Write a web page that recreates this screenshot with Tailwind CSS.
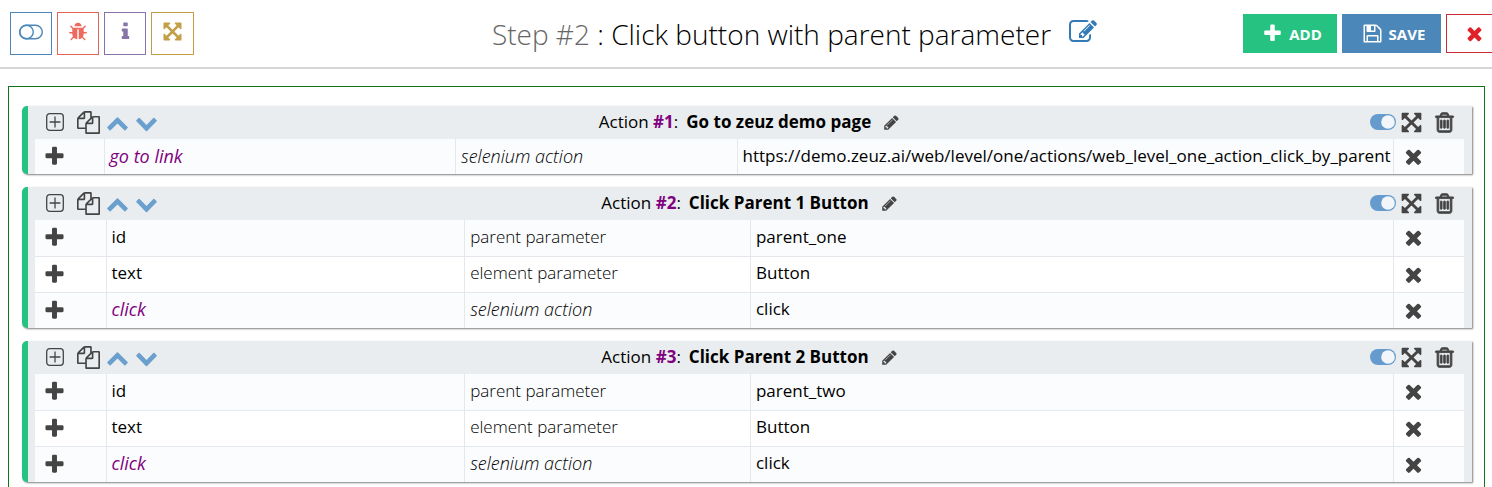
<!DOCTYPE html>
<html lang="en">
<head>
<meta charset="utf-8">
<meta name="viewport" content="width=device-width, initial-scale=1">
<title>Step #2 : Click button with parent parameter</title>
<script src="https://cdn.jsdelivr.net/npm/@tailwindcss/browser@4"></script>
</head>
<body class="bg-white font-['Open_Sans',sans-serif] text-[17px] leading-6 text-black overflow-x-hidden">
<svg class="hidden" aria-hidden="true">
  <symbol id="plus" viewBox="0 0 1792 1792"><path d="M1600 736v192q0 40-28 68t-68 28h-416v416q0 40-28 68t-68 28h-192q-40 0-68-28t-28-68v-416h-416q-40 0-68-28t-28-68v-192q0-40 28-68t68-28h416v-416q0-40 28-68t68-28h192q40 0 68 28t28 68v416h416q40 0 68 28t28 68z"/></symbol>
  <symbol id="times" viewBox="0 0 1792 1792"><path d="M1490 1322q0 40-28 68l-136 136q-28 28-68 28t-68-28l-294-294-294 294q-28 28-68 28t-68-28l-136-136q-28-28-28-68t28-68l294-294-294-294q-28-28-28-68t28-68l136-136q28-28 68-28t68 28l294 294 294-294q28-28 68-28t68 28l136 136q28 28 28 68t-28 68l-294 294 294 294q28 28 28 68z"/></symbol>
  <symbol id="arrows" viewBox="0 0 1792 1792"><path d="M1411 541l-355 355 355 355 144-144q29-31 70-14 39 17 39 59v448q0 26-19 45t-45 19h-448q-42 0-59-40-17-39 14-69l144-144-355-355-355 355 144 144q31 30 14 69-17 40-59 40h-448q-26 0-45-19t-19-45v-448q0-42 40-59 39-17 69 14l144 144 355-355-355-355-144 144q-19 19-45 19-12 0-24-5-40-17-40-59v-448q0-26 19-45t45-19h448q42 0 59 40 17 39-14 69l-144 144 355 355 355-355-144-144q-31-30-14-69 17-40 59-40h448q26 0 45 19t19 45v448q0 42-39 59-13 5-25 5-26 0-45-19z"/></symbol>
  <symbol id="bug" viewBox="0 0 1792 1792"><path d="M1696 960q0 26-19 45t-45 19h-224q0 171-67 290l208 209q19 19 19 45t-19 45q-18 19-45 19t-45-19l-198-197q-5 5-15 13t-42 28.5-65 36.5-82 29-97 13v-896h-128v896q-51 0-101.5-13.5t-87-33-66-39-43.5-32.5l-15-14-183 207q-20 21-48 21-24 0-43-16-19-18-20.5-44.5t15.5-46.5l202-227q-58-114-58-274h-224q-26 0-45-19t-19-45 19-45 45-19h224v-294l-173-173q-19-19-19-45t19-45 45-19 45 19l173 173h844l173-173q19-19 45-19t45 19 19 45-19 45l-173 173v294h224q26 0 45 19t19 45zm-480-576h-640q0-133 93.5-226.5t226.5-93.5 226.5 93.5 93.5 226.5z"/></symbol>
  <symbol id="info" viewBox="0 0 1792 1792"><path d="M1216 1344v128q0 26-19 45t-45 19h-512q-26 0-45-19t-19-45v-128q0-26 19-45t45-19h64v-384h-64q-26 0-45-19t-19-45v-128q0-26 19-45t45-19h384q26 0 45 19t19 45v576h64q26 0 45 19t19 45zm-128-1152v192q0 26-19 45t-45 19h-256q-26 0-45-19t-19-45v-192q0-26 19-45t45-19h256q26 0 45 19t19 45z"/></symbol>
  <symbol id="pencil" viewBox="0 0 1792 1792"><path d="M491 1536l91-91-235-235-91 91v107h128v128h107zm523-928q0-22-22-22-10 0-17 7l-542 542q-7 7-7 17 0 22 22 22 10 0 17-7l542-542q7-7 7-17zm-54-192l416 416-832 832h-416v-416zm683 96q0 53-37 90l-166 166-416-416 166-165q36-38 90-38 53 0 91 38l235 234q37 39 37 91z"/></symbol>
  <symbol id="edit" viewBox="0 0 1792 1792"><path d="M888 1184l116-116-152-152-116 116v56h96v96h56zm440-720q-16-16-33 1l-350 350q-17 17-1 33t33-1l350-350q17-17 1-33zm80 594v190q0 119-84.500 203.500t-203.500 84.500h-832q-119 0-203.500-84.500t-84.500-203.500v-832q0-119 84.500-203.500t203.500-84.500h832q63 0 117 25 15 7 18 23 3 17-9 29l-49 49q-14 14-32 8-23-6-45-6h-832q-66 0-113 47t-47 113v832q0 66 47 113t113 47h832q66 0 113-47t47-113v-126q0-13 9-22l64-64q15-15 35-7t20 29zm-96-738l288 288-672 672h-288v-288zm444 132l-92 92-288-288 92-92q28-28 68-28t68 28l152 152q28 28 28 68t-28 68z"/></symbol>
  <symbol id="floppy" viewBox="0 0 1792 1792"><path d="M512 1536h768v-384h-768v384zm896 0h128v-896q0-14-10-38.500t-20-34.500l-281-281q-10-10-34-20t-39-10v416q0 40-28 68t-68 28h-576q-40 0-68-28t-28-68v-416h-128v1280h128v-416q0-40 28-68t68-28h832q40 0 68 28t28 68v416zm-384-928v-320q0-13-9.500-22.500t-22.500-9.500h-192q-13 0-22.500 9.500t-9.500 22.500v320q0 13 9.500 22.500t22.500 9.500h192q13 0 22.500-9.500t9.500-22.500zm640 32v928q0 40-28 68t-68 28h-1344q-40 0-68-28t-28-68v-1344q0-40 28-68t68-28h928q40 0 88 20t76 48l280 280q28 28 48 76t20 88z"/></symbol>
  <symbol id="files" viewBox="0 0 1792 1792"><path d="M1696 384q40 0 68 28t28 68v1216q0 40-28 68t-68 28h-960q-40 0-68-28t-28-68v-288h-544q-40 0-68-28t-28-68v-672q0-40 20-88t48-76l408-408q28-28 76-48t88-20h416q40 0 68 28t28 68v328q68-40 128-40h416zm-544 213l-299 299h299v-299zm-640-384l-299 299h299v-299zm196 647l316-316v-416h-384v416q0 40-28 68t-68 28h-416v640h512v-256q0-40 20-88t48-76zm956 804v-1152h-384v416q0 40-28 68t-68 28h-416v640h896z"/></symbol>
  <symbol id="up" viewBox="0 0 1792 1792"><path d="M1683 1331l-166 165q-19 19-45 19t-45-19l-531-531-531 531q-19 19-45 19t-45-19l-166-165q-19-19-19-45.500t19-45.500l742-741q19-19 45-19t45 19l742 741q19 19 19 45.500t-19 45.500z"/></symbol>
  <symbol id="down" viewBox="0 0 1792 1792"><path d="M1683 808l-742 741q-19 19-45 19t-45-19l-742-741q-19-19-19-45.500t19-45.500l166-165q19-19 45-19t45 19l531 531 531-531q19-19 45-19t45 19l166 165q19 19 19 45.500t-19 45.500z"/></symbol>
  <symbol id="trash" viewBox="0 0 1792 1792"><path stroke="currentColor" stroke-width="70" d="M704 736v576q0 14-9 23t-23 9h-64q-14 0-23-9t-9-23v-576q0-14 9-23t23-9h64q14 0 23 9t9 23zm256 0v576q0 14-9 23t-23 9h-64q-14 0-23-9t-9-23v-576q0-14 9-23t23-9h64q14 0 23 9t9 23zm256 0v576q0 14-9 23t-23 9h-64q-14 0-23-9t-9-23v-576q0-14 9-23t23-9h64q14 0 23 9t9 23zm128 724v-948h-896v948q0 22 7 40.500t14.500 27 10.500 8.500h832q3 0 10.500-8.500t14.500-27 7-40.500zm-672-1076h448l-48-117q-7-9-17-11h-317q-10 2-17 11zm928 32v64q0 14-9 23t-23 9h-96v948q0 83-47 143.500t-113 60.500h-832q-66 0-113-58.500t-47-141.500v-952h-96q-14 0-23-9t-9-23v-64q0-14 9-23t23-9h309l70-167q15-37 54-63t79-26h320q40 0 79 26t54 63l70 167h309q14 0 23 9t9 23z"/></symbol>
  <symbol id="plusbox" viewBox="0 0 18 18"><g fill="none" stroke="currentColor" stroke-width="1.300"><rect x="0.700" y="0.700" width="16.600" height="16.600" rx="3"/><path d="M9 3.600v10.800M3.600 9h10.800"/></g></symbol>
  <symbol id="toggle" viewBox="0 0 26 16"><rect width="26" height="16" rx="8"/><circle cx="18" cy="8" r="6.800" fill="#f2f6fa"/></symbol>
  <symbol id="toggleline" viewBox="0 0 24 16"><g fill="none" stroke="currentColor" stroke-width="1.400"><rect x="0.700" y="1.200" width="22.600" height="13.600" rx="6.800"/><circle cx="7.500" cy="8" r="6.800"/></g></symbol>
</svg>

<header class="flex h-[69px] items-start border-b-2 border-[#d6d6d6] pl-[10px]">
  <nav class="mt-3 flex gap-[5px]" aria-label="Step tools">
    <button aria-label="Toggle" class="grid h-[43px] w-[42px] place-items-center border border-[#4c87b9] text-[#4c87b9]"><svg class="mb-[3px] h-4 w-6 fill-current"><use href="#toggleline"/></svg></button>
    <button aria-label="Debug" class="grid h-[43px] w-[42px] place-items-center border border-[#e7645a] text-[#ee6a5f]"><svg class="mb-1 size-[20px] fill-current"><use href="#bug"/></svg></button>
    <button aria-label="Info" class="grid h-[43px] w-[42px] place-items-center border border-[#8572a8] text-[#8775a7]"><svg class="mb-1 size-[21px] fill-current"><use href="#info"/></svg></button>
    <button aria-label="Expand" class="grid h-[43px] w-[43px] place-items-center border border-[#c29d43] text-[#c49f47]"><svg class="mb-1 size-[21px] fill-current"><use href="#arrows"/></svg></button>
  </nav>
  <div class="flex h-[67px] flex-1 items-center justify-center gap-[18px] pl-[152px] text-[28px] font-light">
    <h1 class="whitespace-nowrap"><span class="text-[#666]">Step #2</span> : Click button with parent parameter</h1>
    <button aria-label="Rename step" class="text-[#337ab7]"><svg class="mb-1 size-7 fill-current"><use href="#edit"/></svg></button>
  </div>
  <div class="mt-[14px] -mr-[10px] flex gap-[5px] text-[15px] font-bold text-white">
    <button class="flex h-[39px] w-[94px] items-center justify-center gap-[6px] bg-[#26c281] pl-1"><svg class="size-[21px] fill-current"><use href="#plus"/></svg>ADD</button>
    <button class="flex h-[39px] w-[99px] items-center justify-center gap-[6px] bg-[#4c87b9] pl-1"><svg class="size-[21px] fill-current"><use href="#floppy"/></svg>SAVE</button>
    <button aria-label="Close" class="flex h-[39px] w-14 items-center justify-center border border-[#cb2b36] text-[#e02228]"><svg class="size-[21px] fill-current"><use href="#times"/></svg></button>
  </div>
</header>

<main class="mt-[17px] mr-[7px] ml-2 flex flex-col gap-[13px] border border-[#12761a] py-[19px] pr-3 pl-[13px]">

  <section class="rounded-l-[5px] border-l-6 border-[#26c281] bg-[#e9edef] pr-2 pl-[7px] shadow-[1px_1px_2px_rgba(0,0,0,0.5)]">
    <div class="grid h-[33px] grid-cols-[1fr_auto_1fr] items-center pb-px text-[#444]">
      <div class="flex items-center pl-[11px]">
        <button aria-label="Add row" class="mr-[13px]"><svg class="size-[18px] fill-current"><use href="#plusbox"/></svg></button>
        <button aria-label="Duplicate" class="mr-[6px]"><svg class="size-[23px] fill-current"><use href="#files"/></svg></button>
        <button aria-label="Move up" class="mr-[6px] text-[#6a9fce]"><svg class="size-[23px] fill-current"><use href="#up"/></svg></button>
        <button aria-label="Move down" class="text-[#6a9fce]"><svg class="size-[23px] fill-current"><use href="#down"/></svg></button>
      </div>
      <h2 class="flex items-center gap-2 text-black"><span>Action <b class="text-[#800080]">#1</b>:</span><b>Go to zeuz demo page</b><button aria-label="Rename action" class="ml-1 text-[#444]"><svg class="size-[17px] fill-current"><use href="#pencil"/></svg></button></h2>
      <div class="flex items-center justify-end pr-2">
        <button aria-label="Enabled" class="mr-1 text-[#659bcd]"><svg class="h-4 w-[26px] fill-current"><use href="#toggle"/></svg></button>
        <button aria-label="Expand" class="mr-[10px]"><svg class="size-[23px] fill-current"><use href="#arrows"/></svg></button>
        <button aria-label="Delete"><svg class="size-[23px] fill-current"><use href="#trash"/></svg></button>
      </div>
    </div>
    <table class="w-full table-fixed bg-[#fbfcfd]">
      <colgroup><col class="w-[69px]"><col class="w-[24.6%]"><col class="w-[19.7%]"><col><col class="w-[71px]"></colgroup>
      <tbody class="[&_td]:border-l [&_td]:border-[#e4e8ec] [&_td]:px-[5px] [&_td]:pt-0 [&_td]:pb-[2px] [&_td]:whitespace-nowrap [&_td:first-child]:border-l-0 [&_td:first-child]:pb-0 [&_td:first-child]:pl-2 [&_td:last-child]:pb-0 [&_td:last-child]:pl-2">
        <tr class="h-[35px]"><td><button aria-label="Add" class="block text-[#444]"><svg class="size-[23px] fill-current"><use href="#plus"/></svg></button></td><td class="text-lg/6 text-[#800080] italic">go to link</td><td class="text-lg/6 font-light italic">selenium action</td><td>https://demo.zeuz.ai/web/level/one/actions/web_level_one_action_click_by_parent</td><td><button aria-label="Remove" class="block text-[#444]"><svg class="size-[23px] fill-current"><use href="#times"/></svg></button></td></tr>
      </tbody>
    </table>
  </section>

  <section class="rounded-l-[5px] border-l-6 border-[#26c281] bg-[#e9edef] pr-2 pl-[7px] shadow-[1px_1px_2px_rgba(0,0,0,0.5)]">
    <div class="grid h-[33px] grid-cols-[1fr_auto_1fr] items-center pb-px text-[#444]">
      <div class="flex items-center pl-[11px]">
        <button aria-label="Add row" class="mr-[13px]"><svg class="size-[18px] fill-current"><use href="#plusbox"/></svg></button>
        <button aria-label="Duplicate" class="mr-[6px]"><svg class="size-[23px] fill-current"><use href="#files"/></svg></button>
        <button aria-label="Move up" class="mr-[6px] text-[#6a9fce]"><svg class="size-[23px] fill-current"><use href="#up"/></svg></button>
        <button aria-label="Move down" class="text-[#6a9fce]"><svg class="size-[23px] fill-current"><use href="#down"/></svg></button>
      </div>
      <h2 class="flex items-center gap-2 text-black"><span>Action <b class="text-[#800080]">#2</b>:</span><b>Click Parent 1 Button</b><button aria-label="Rename action" class="ml-1 text-[#444]"><svg class="size-[17px] fill-current"><use href="#pencil"/></svg></button></h2>
      <div class="flex items-center justify-end pr-2">
        <button aria-label="Enabled" class="mr-1 text-[#659bcd]"><svg class="h-4 w-[26px] fill-current"><use href="#toggle"/></svg></button>
        <button aria-label="Expand" class="mr-[10px]"><svg class="size-[23px] fill-current"><use href="#arrows"/></svg></button>
        <button aria-label="Delete"><svg class="size-[23px] fill-current"><use href="#trash"/></svg></button>
      </div>
    </div>
    <table class="w-full table-fixed bg-white">
      <colgroup><col class="w-[71px]"><col class="w-[25.1%]"><col class="w-[20%]"><col><col class="w-[71px]"></colgroup>
      <tbody class="[&_tr]:h-9 [&_tr]:border-b [&_tr]:border-[#e4e8ec] [&_tr:last-child]:border-b-0 [&_tr:nth-child(odd)]:bg-[#fbfcfd] [&_td]:border-l [&_td]:border-[#e4e8ec] [&_td]:px-[5px] [&_td]:pt-0 [&_td]:pb-[2px] [&_td]:whitespace-nowrap [&_td:first-child]:border-l-0 [&_td:first-child]:pb-0 [&_td:first-child]:pl-2 [&_td:last-child]:pb-0 [&_td:last-child]:pl-2">
        <tr><td><button aria-label="Add" class="block text-[#444]"><svg class="size-[23px] fill-current"><use href="#plus"/></svg></button></td><td>id</td><td class="font-light">parent parameter</td><td>parent_one</td><td><button aria-label="Remove" class="block text-[#444]"><svg class="size-[23px] fill-current"><use href="#times"/></svg></button></td></tr>
        <tr><td><button aria-label="Add" class="block text-[#444]"><svg class="size-[23px] fill-current"><use href="#plus"/></svg></button></td><td>text</td><td class="font-light">element parameter</td><td>Button</td><td><button aria-label="Remove" class="block text-[#444]"><svg class="size-[23px] fill-current"><use href="#times"/></svg></button></td></tr>
        <tr><td><button aria-label="Add" class="block text-[#444]"><svg class="size-[23px] fill-current"><use href="#plus"/></svg></button></td><td class="text-lg/6 text-[#800080] italic">click</td><td class="text-lg/6 font-light italic">selenium action</td><td>click</td><td><button aria-label="Remove" class="block text-[#444]"><svg class="size-[23px] fill-current"><use href="#times"/></svg></button></td></tr>
      </tbody>
    </table>
  </section>

  <section class="rounded-l-[5px] border-l-6 border-[#26c281] bg-[#e9edef] pr-2 pl-[7px] shadow-[1px_1px_2px_rgba(0,0,0,0.5)]">
    <div class="grid h-[33px] grid-cols-[1fr_auto_1fr] items-center pb-px text-[#444]">
      <div class="flex items-center pl-[11px]">
        <button aria-label="Add row" class="mr-[13px]"><svg class="size-[18px] fill-current"><use href="#plusbox"/></svg></button>
        <button aria-label="Duplicate" class="mr-[6px]"><svg class="size-[23px] fill-current"><use href="#files"/></svg></button>
        <button aria-label="Move up" class="mr-[6px] text-[#6a9fce]"><svg class="size-[23px] fill-current"><use href="#up"/></svg></button>
        <button aria-label="Move down" class="text-[#6a9fce]"><svg class="size-[23px] fill-current"><use href="#down"/></svg></button>
      </div>
      <h2 class="flex items-center gap-2 text-black"><span>Action <b class="text-[#800080]">#3</b>:</span><b>Click Parent 2 Button</b><button aria-label="Rename action" class="ml-1 text-[#444]"><svg class="size-[17px] fill-current"><use href="#pencil"/></svg></button></h2>
      <div class="flex items-center justify-end pr-2">
        <button aria-label="Enabled" class="mr-1 text-[#659bcd]"><svg class="h-4 w-[26px] fill-current"><use href="#toggle"/></svg></button>
        <button aria-label="Expand" class="mr-[10px]"><svg class="size-[23px] fill-current"><use href="#arrows"/></svg></button>
        <button aria-label="Delete"><svg class="size-[23px] fill-current"><use href="#trash"/></svg></button>
      </div>
    </div>
    <table class="w-full table-fixed bg-white">
      <colgroup><col class="w-[71px]"><col class="w-[25.1%]"><col class="w-[20%]"><col><col class="w-[71px]"></colgroup>
      <tbody class="[&_tr]:h-9 [&_tr]:border-b [&_tr]:border-[#e4e8ec] [&_tr:last-child]:border-b-0 [&_tr:nth-child(odd)]:bg-[#fbfcfd] [&_td]:border-l [&_td]:border-[#e4e8ec] [&_td]:px-[5px] [&_td]:pt-0 [&_td]:pb-[2px] [&_td]:whitespace-nowrap [&_td:first-child]:border-l-0 [&_td:first-child]:pb-0 [&_td:first-child]:pl-2 [&_td:last-child]:pb-0 [&_td:last-child]:pl-2">
        <tr><td><button aria-label="Add" class="block text-[#444]"><svg class="size-[23px] fill-current"><use href="#plus"/></svg></button></td><td>id</td><td class="font-light">parent parameter</td><td>parent_two</td><td><button aria-label="Remove" class="block text-[#444]"><svg class="size-[23px] fill-current"><use href="#times"/></svg></button></td></tr>
        <tr><td><button aria-label="Add" class="block text-[#444]"><svg class="size-[23px] fill-current"><use href="#plus"/></svg></button></td><td>text</td><td class="font-light">element parameter</td><td>Button</td><td><button aria-label="Remove" class="block text-[#444]"><svg class="size-[23px] fill-current"><use href="#times"/></svg></button></td></tr>
        <tr><td><button aria-label="Add" class="block text-[#444]"><svg class="size-[23px] fill-current"><use href="#plus"/></svg></button></td><td class="text-lg/6 text-[#800080] italic">click</td><td class="text-lg/6 font-light italic">selenium action</td><td>click</td><td><button aria-label="Remove" class="block text-[#444]"><svg class="size-[23px] fill-current"><use href="#times"/></svg></button></td></tr>
      </tbody>
    </table>
  </section>
</main>
</body>
</html>
